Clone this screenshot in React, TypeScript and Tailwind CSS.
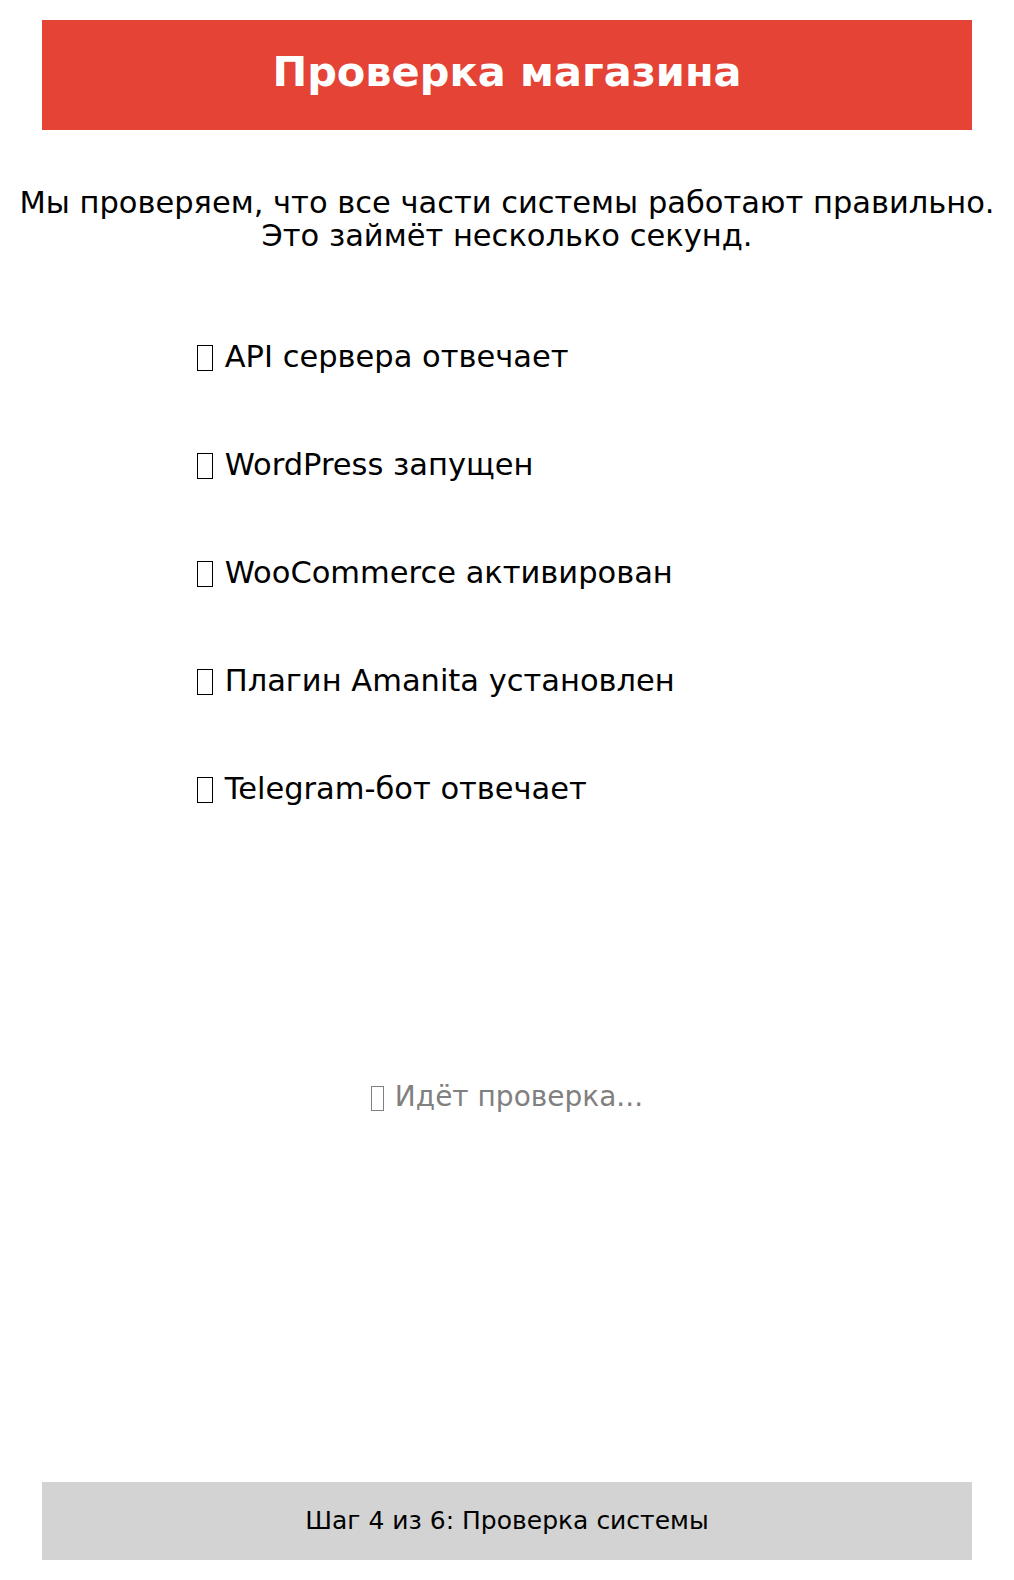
const checks = [
  'API сервера отвечает',
  'WordPress запущен',
  'WooCommerce активирован',
  'Плагин Amanita установлен',
  'Telegram-бот отвечает',
];

// missing-glyph box, as the emoji shows up without an emoji font
function Tofu({ wide = true }: { wide?: boolean }) {
  return (
    <span
      className={
        wide
          ? 'mr-[2px] inline-block h-[26px] w-[16px] border-[1.5px] border-current align-[-4px]'
          : 'mr-[2px] inline-block h-[25px] w-[13px] border-[1.5px] border-current align-[-5px]'
      }
    />
  );
}

export default function App() {
  return (
    <div className="flex min-h-[1580px] flex-col bg-white p-5 font-['DejaVu_Sans',sans-serif] text-black">
      {/* Header */}
      <header className="mx-[22px] flex h-[110px] items-center justify-center bg-[#e44336] pb-[6px]">
        <h1 className="text-[41.5px] font-bold leading-none text-white">Проверка магазина</h1>
      </header>

      {/* Intro */}
      <p className="-mx-5 mt-[56px] text-center text-[30.5px] leading-[33px] whitespace-nowrap">
        Мы проверяем, что все части системы работают правильно.
        <br />
        Это займёт несколько секунд.
      </p>

      {/* Checklist */}
      <ul className="mx-auto mt-[88px] flex w-[620px] flex-col gap-[75px]">
        {checks.map(item => (
          <li key={item} className="text-[30.5px] leading-[33px]">
            <Tofu /> {item}
          </li>
        ))}
      </ul>

      {/* Status */}
      <div className="mt-[275px] text-center text-[28px] leading-[33px] text-[#808080]">
        <Tofu wide={false} /> Идёт проверка...
      </div>

      {/* Footer */}
      <footer className="mx-[22px] mt-auto flex h-[78px] items-center justify-center bg-[#d3d3d3]">
        <span className="text-[25px]">Шаг 4 из 6: Проверка системы</span>
      </footer>
    </div>
  );
}
